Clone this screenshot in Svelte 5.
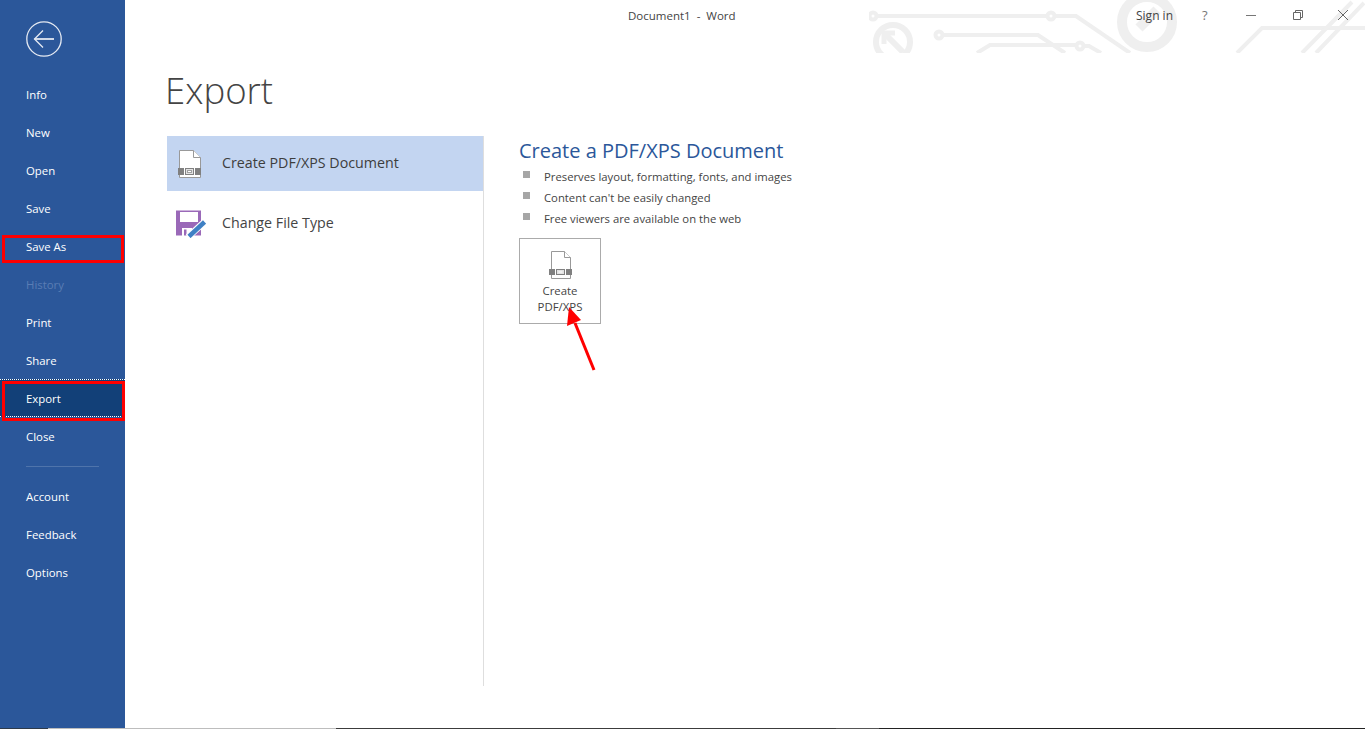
<script>
  const topItems = ["Info", "New", "Open", "Save", "Save As", "History", "Print", "Share", "Export", "Close"];
  const bottomItems = ["Account", "Feedback", "Options"];
  const bullets = [
    "Preserves layout, formatting, fonts, and images",
    "Content can't be easily changed",
    "Free viewers are available on the web",
  ];
</script>

<div class="window">
  <nav class="sidebar">
    <button class="back" aria-label="Back">
      <svg width="36" height="36" viewBox="0 0 36 36">
        <circle cx="18" cy="18" r="17.2" fill="none" stroke="#e4e9f2" stroke-width="1.3" />
        <path d="M8.500 18H28" fill="none" stroke="#cfd8e8" stroke-width="2" />
        <path d="M17 9.500L8.500 18l8.500 8.500" fill="none" stroke="#e4e9f2" stroke-width="1.3" />
      </svg>
    </button>
    {#each topItems as item}
      <div class="nav-item" class:disabled={item === "History"} class:active={item === "Export"}>{item}</div>
    {/each}
    <div class="divider"></div>
    {#each bottomItems as item}
      <div class="nav-item">{item}</div>
    {/each}
    <div class="outline save-as"></div>
    <div class="outline export"></div>
  </nav>

  <main class="content">
    <header class="titlebar">
      <svg class="pattern" width="496" height="53" viewBox="869 0 496 53">
        <g fill="none" stroke="#efefef" stroke-width="4">
          <circle cx="873" cy="16" r="3.500" />
          <path d="M877 16H1047" />
          <circle cx="1051" cy="16" r="3.500" />
          <path d="M1055 16H1076L1130 53" />
          <circle cx="893" cy="42" r="17" stroke-width="6" />
          <path d="M885 34L903 52" stroke-width="6" />
          <path d="M884 44V33H895" stroke-width="5" />
          <circle cx="939" cy="35" r="3.500" />
          <path d="M943 35H1038L1065 53" />
          <path d="M977 53L990 45H1076" />
          <circle cx="1080" cy="46" r="3.500" />
          <path d="M1084 46H1089L1101 53" />
          <circle cx="1147" cy="22" r="25" stroke-width="10" />
          <path d="M1139 28L1157 10" stroke-width="10" />
          <path d="M1237 53L1262 28H1365" />
          <path d="M1302 53L1352 2M1316 53L1364 3" />
        </g>
      </svg>
      <div class="doc-title">Document1 &nbsp;-&nbsp; Word</div>
      <div class="window-controls">
        <span class="signin">Sign in</span>
        <span class="help">?</span>
        <svg class="minimize" width="12" height="12" viewBox="0 0 12 12"><path d="M1 6.500H11" stroke="#777" /></svg>
        <svg class="restore" width="10" height="10" viewBox="0 0 10 10"><path d="M.5 2.500h7v7h-7zM2.500 2.500V.5h7v7h-2" fill="none" stroke="#666" /></svg>
        <svg class="close" width="12" height="12" viewBox="0 0 12 12"><path d="M1 1L11 11M11 1L1 11" stroke="#666" /></svg>
      </div>
    </header>

    <h1>Export</h1>

    <div class="panels">
      <div class="options">
        <div class="option selected">
          <svg width="30" height="28" viewBox="0 0 30 28">
            <path d="M3.500 .5h14l7 7v20h-21z" fill="#fff" stroke="#999" />
            <path d="M17.500 .5v7h7" fill="#fff" stroke="#999" />
            <rect x="2" y="18" width="6" height="7" fill="#808080" />
            <rect x="19" y="18" width="6" height="7" fill="#808080" />
            <rect x="9.500" y="18.500" width="8" height="6" fill="#e2e2e2" stroke="#808080" />
            <rect x="11.500" y="20.500" width="4" height="2" fill="#fff" stroke="#a0a0a0" />
          </svg>
          <span>Create PDF/XPS Document</span>
        </div>
        <div class="option">
          <svg width="30" height="28" viewBox="0 0 30 28">
            <path d="M0 .5h25v25H0z" fill="#9a69b8" />
            <rect x="4" y="2" width="18" height="10" fill="#fff" />
            <rect x="6" y="18" width="10" height="8" fill="#fff" />
            <rect x="8" y="19.500" width="2.500" height="6" fill="#9a69b8" />
            <path d="M12 27L29 11.500" stroke="#fff" stroke-width="6.500" />
            <path d="M13 26.500L28.500 12" stroke="#3f80c4" stroke-width="4.500" />
          </svg>
          <span>Change File Type</span>
        </div>
      </div>

      <section class="detail">
        <h2>Create a PDF/XPS Document</h2>
        <ul>
          {#each bullets as bullet}
            <li>{bullet}</li>
          {/each}
        </ul>
        <button class="create-btn">
          <svg width="23" height="28" viewBox="0 0 23 28">
            <path d="M2.500 .5h13l6 6v21h-19z" fill="#fff" stroke="#999" />
            <path d="M15.500 .5v6h6" fill="#fff" stroke="#999" />
            <rect x="0" y="18" width="6" height="6" fill="#808080" />
            <rect x="17" y="18" width="6" height="6" fill="#808080" />
            <rect x="7.500" y="18.500" width="8" height="5" fill="#e2e2e2" stroke="#808080" />
            <rect x="9.500" y="20.500" width="4" height="1" fill="#fff" />
          </svg>
          <span>Create<br />PDF/XPS</span>
        </button>
      </section>
    </div>
  </main>

  <svg class="arrow" width="40" height="70" viewBox="0 0 40 70">
    <path d="M30 66L11 19" stroke="#f00" stroke-width="3" />
    <path d="M5 3L3 22 17 16z" fill="#f00" />
  </svg>
  <div class="screen-edge"></div>
</div>

<style>
  :global(body) {
    background: #fff;
  }

  .window {
    position: relative;
    display: flex;
    height: 729px;
    overflow: hidden;
    font-family: "Open Sans", "Liberation Sans", sans-serif;
    color: #444;
  }

  .sidebar {
    position: relative;
    flex: 0 0 125px;
    padding-top: 76px;
    background: #2b579a;
  }

  .back {
    position: absolute;
    left: 26px;
    top: 21px;
    padding: 0;
    border: 0;
    background: none;
    line-height: 0;
  }

  .nav-item {
    height: 38px;
    padding-left: 26px;
    font-size: 11.4px;
    line-height: 38px;
    color: #fff;
  }

  .nav-item.disabled {
    color: #5a7db4;
  }

  .nav-item.active {
    height: 36px;
    margin: -1px 0 1px;
    border-top: 1px dotted #fff;
    border-bottom: 1px dotted #fff;
    background: #124078;
  }

  .divider {
    height: 1px;
    margin: 10px 26px 11px;
    background: #4f74ab;
  }

  .outline {
    position: absolute;
    left: 2px;
    box-sizing: border-box;
    border: 3px solid #f00;
  }

  .outline.save-as {
    top: 235px;
    width: 122px;
    height: 28px;
  }

  .outline.export {
    top: 381px;
    width: 123px;
    height: 40px;
  }

  .content {
    flex: 1;
    min-width: 0;
    position: relative;
  }

  .titlebar {
    position: relative;
    height: 53px;
  }

  .pattern {
    position: absolute;
    right: 0;
    top: 0;
  }

  .doc-title {
    position: absolute;
    left: 503px;
    top: 8px;
    font-size: 11.5px;
    line-height: 16px;
    color: #444;
  }

  .window-controls span,
  .window-controls svg {
    position: absolute;
  }

  .signin {
    left: 1011px;
    top: 8px;
    font-size: 12px;
    line-height: 16px;
  }

  .help {
    left: 1077px;
    top: 7px;
    font-size: 13px;
    line-height: 16px;
    color: #777;
  }

  .minimize {
    left: 1120px;
    top: 9px;
  }

  .restore {
    left: 1168px;
    top: 10px;
  }

  .close {
    left: 1212px;
    top: 9px;
  }

  h1 {
    margin: 13px 0 0 40px;
    height: 70px;
    font-size: 36.6px;
    font-weight: 300;
    line-height: 48px;
    color: #444;
  }

  .panels {
    display: flex;
    height: 550px;
    margin-left: 42px;
  }

  .options {
    flex: 0 0 316px;
    border-right: 1px solid #dedede;
  }

  .option {
    display: flex;
    align-items: center;
    height: 55px;
    padding-left: 9px;
    gap: 16px;
    font-size: 14.25px;
    color: #444;
  }

  .option span {
    margin-top: -2px;
  }

  .option + .option {
    height: 65px;
  }

  .option.selected {
    background: #c3d5f1;
    color: #3d3d3d;
  }

  .detail {
    padding: 0 0 0 35px;
  }

  h2 {
    margin: 0;
    height: 30px;
    font-size: 20px;
    font-weight: 400;
    line-height: 30px;
    color: #2b579a;
  }

  ul {
    margin: 0;
    padding: 0;
    list-style: none;
  }

  li {
    position: relative;
    height: 21px;
    padding-left: 25px;
    font-size: 11.3px;
    line-height: 21px;
    color: #444;
  }

  li::before {
    content: "";
    position: absolute;
    left: 4px;
    top: 5px;
    width: 7px;
    height: 7px;
    background: #a6a6a6;
  }

  .create-btn {
    display: flex;
    flex-direction: column;
    align-items: center;
    box-sizing: border-box;
    width: 82px;
    height: 86px;
    margin-top: 9px;
    padding: 12px 0 0;
    border: 1px solid #ababab;
    background: #fff;
    font-family: inherit;
    font-size: 11.4px;
    line-height: 16px;
    color: #444;
  }

  .create-btn span {
    margin-top: 4px;
  }

  .arrow {
    position: absolute;
    left: 564px;
    top: 304px;
  }

  .screen-edge {
    position: absolute;
    left: 0;
    right: 0;
    bottom: 0;
    height: 1px;
    background: linear-gradient(to right, #2d3a4a 48px, #bdbdbd 48px, #bdbdbd 336px, #3c3c3c 336px, #3c3c3c 836px, #555 836px, #555 879px, #222 879px);
  }
</style>
